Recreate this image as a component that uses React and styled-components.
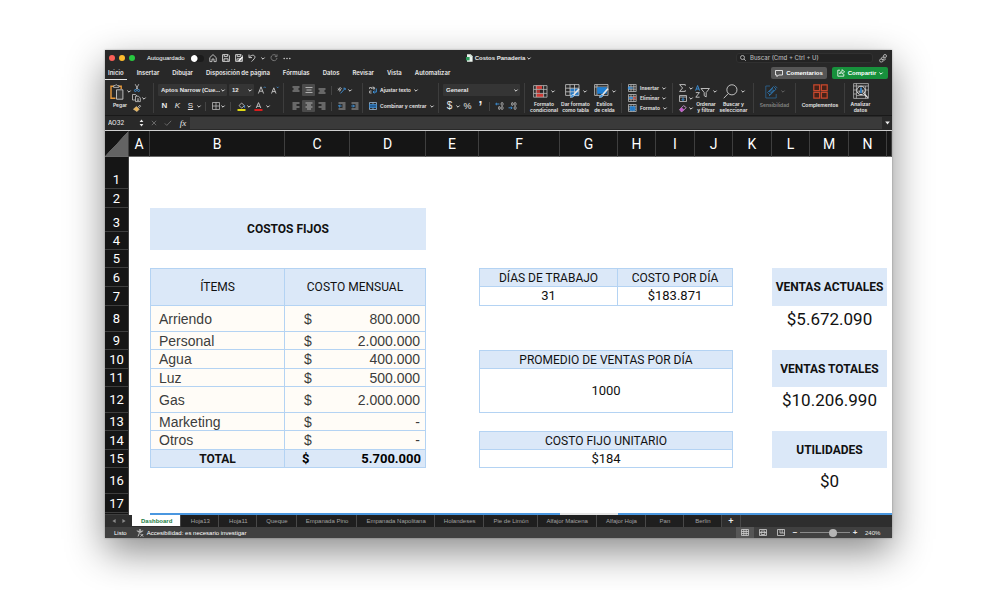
import React from "react";
import styled, { createGlobalStyle, css } from "styled-components";

const UI = `Inter, "Liberation Sans", sans-serif`;
const SANS = `"Liberation Sans", Arial, sans-serif`;
const SHEET = `Roboto, "Liberation Sans", sans-serif`;
const LINE = "#b4d3f3";
const BLUE = "#3d93dc";
const INK = "#c9c9c9";

const Global = createGlobalStyle`
  *, *::before, *::after { box-sizing: border-box; }
  body { margin: 0; background: #fff; font-family: ${UI}; }
  button, input, select { font: inherit; color: inherit; margin: 0; padding: 0; border: 0; background: none; }
`;

const Page = styled.main`
  padding: 50px 108px 52px 105px;
`;

const Window = styled.div`
  display: flex;
  flex-direction: column;
  overflow: hidden;
  background: #282828;
  color: #e8e8e8;
  box-shadow: 0 14px 36px rgba(0, 0, 0, 0.46), 0 0 2px rgba(0, 0, 0, 0.3);
`;

const Svg = styled.svg`
  display: block;
  flex: none;
  fill: none;
  stroke: ${(p) => p.$c || INK};
  stroke-width: 1;
  overflow: visible;
`;

/* ---------- title bar ---------- */
const TitleBar = styled.header`
  display: grid;
  grid-template-columns: 1fr auto 1fr;
  align-items: center;
  height: 16px;
  font: 500 6px/8px ${SANS};
`;
const TitleLeft = styled.div`
  display: flex;
  align-items: center;
  gap: 5px;
  padding-left: 4px;
`;
const Lights = styled.div`
  display: flex;
  gap: 4px;
  margin-right: 7px;
`;
const Light = styled.button`
  width: 6px;
  height: 6px;
  border-radius: 50%;
  background: ${(p) => p.$c};
`;
const AutoSave = styled.label`
  display: flex;
  align-items: center;
  gap: 6px;
  color: #fff;
`;
const Toggle = styled.input`
  appearance: none;
  width: 13px;
  height: 7px;
  border-radius: 4px;
  background: radial-gradient(circle at 3px 50%, #fff 3px, transparent 4px) #1b1b1b;
`;
const QuickButton = styled.button`
  display: grid;
  place-items: center;
  width: ${(p) => p.$w || 8}px;
  height: 10px;
`;
const DocTitle = styled.button`
  display: flex;
  align-items: center;
  gap: 2px;
  font-weight: 700;
`;
const TitleRight = styled.div`
  display: flex;
  justify-content: flex-end;
  align-items: center;
  gap: 6px;
  padding-right: 5px;
`;
const SearchBox = styled.label`
  display: flex;
  align-items: center;
  gap: 4px;
  width: 137px;
  height: 10px;
  padding-left: 3px;
  border-radius: 3px;
  background: #232323;
  border: 1px solid #303030;
  input { flex: 1; min-width: 0; outline: 0; font: 500 6px/8px ${UI}; }
  input::placeholder { color: #b5b5b5; opacity: 1; }
`;

/* ---------- menu tabs ---------- */
const MenuRow = styled.div`
  display: flex;
  align-items: center;
  justify-content: space-between;
  height: 14px;
  padding-right: 4px;
  font: 700 6px/8px ${SANS};
`;
const Menus = styled.nav`
  display: flex;
  gap: 7px;
  font: 600 6px/8px ${UI};
`;
const MenuTab = styled.button`
  height: 14px;
  padding: 0 3px;
  border-bottom: 1px solid ${(p) => (p.$on ? "#e6e6e6" : "transparent")};
`;
const Actions = styled.div`
  display: flex;
  gap: 5px;
`;
const Action = styled.button`
  display: flex;
  align-items: center;
  justify-content: center;
  gap: 3px;
  width: 56px;
  height: 12px;
  border-radius: 2px;
  color: #fff;
  background: ${(p) => (p.$green ? "#17913c" : "#565656")};
`;

/* ---------- ribbon ---------- */
const Ribbon = styled.div`
  display: flex;
  height: 36px;
  padding: 3px 0;
  border-bottom: 1px solid #191919;
  font: 600 5px/6px ${UI};
`;
const Group = styled.div`
  flex: none;
  width: ${(p) => p.$w}px;
  height: 30px;
  padding: ${(p) => p.$pad || "0 4px"};
  display: flex;
  flex-direction: ${(p) => (p.$rows ? "column" : "row")};
  justify-content: ${(p) => (p.$rows ? "space-between" : p.$justify || "flex-start")};
  gap: ${(p) => p.$gap || 0}px;
  border-right: 1px solid ${(p) => (p.$last ? "transparent" : "#3d3d3d")};
`;
const Line = styled.div`
  display: flex;
  align-items: center;
  gap: ${(p) => p.$gap || 0}px;
  height: ${(p) => p.$h || 14}px;
`;
const Tool = styled.button`
  display: grid;
  place-items: center;
  flex: none;
  width: ${(p) => p.$w || 13}px;
  height: 12px;
  border-radius: 1px;
  background: ${(p) => (p.$on ? "#4a4a4a" : "none")};
  font: ${(p) => p.$font || `700 8px/10px ${SANS}`};
`;
const Divider = styled.span`
  flex: none;
  width: 1px;
  height: 9px;
  margin: 0 ${(p) => p.$m || 3}px;
  background: #444;
`;
const ComboBox = styled.div`
  position: relative;
  flex: none;
  width: ${(p) => p.$w}px;
  height: 12px;
  border-radius: 1px;
  background: #353535;
  select {
    appearance: none;
    width: 100%;
    height: 12px;
    padding: 0 7px 0 3px;
    font: 700 6px/12px ${SANS};
    outline: 0;
  }
  svg { position: absolute; right: 2px; top: 5px; pointer-events: none; }
`;
const TextTool = styled.button`
  display: flex;
  align-items: center;
  gap: 3px;
  height: ${(p) => p.$h || 12}px;
  white-space: nowrap;
`;
const BigTool = styled.button`
  display: flex;
  flex-direction: column;
  align-items: center;
  gap: 2px;
  flex: none;
  width: ${(p) => p.$w}px;
  white-space: nowrap;
  color: ${(p) => (p.$off ? "#858585" : "inherit")};
  line-height: 6px;
`;
const BigIcon = styled.span`
  display: flex;
  align-items: center;
  gap: 3px;
  height: 17px;
`;

/* ---------- formula bar ---------- */
const FormulaBar = styled.div`
  display: flex;
  align-items: center;
  height: 15px;
  border-bottom: 1px solid #cfcfcf;
  background: #292929;
  font: 500 6px/8px ${UI};
`;
const NameBox = styled.input`
  width: 32px;
  padding-left: 3px;
  outline: 0;
`;
const FormulaTools = styled.div`
  display: flex;
  align-items: center;
  gap: 5px;
  width: 53px;
`;
const FormulaInput = styled.input`
  flex: 1;
  min-width: 0;
  height: 12px;
  background: #3a3a3a !important;
  outline: 0;
`;
const Expand = styled.button`
  display: grid;
  place-items: center;
  width: 10px;
  height: 12px;
`;

/* ---------- sheet ---------- */
const Grid = styled.table`
  width: 100%;
  table-layout: fixed;
  border-collapse: separate;
  border-spacing: 0;
  background: #fff;
  color: #111;
  font: 400 12px/16px ${SHEET};
  th, td { padding: 0; }
`;
const ColHead = styled.th`
  height: 26px;
  background: #151515;
  color: #fff;
  font: 400 14px/18px ${SHEET};
  border-right: 1px solid #3e3e3e;
  border-bottom: 1px solid #6a6a6a;
`;
const Corner = styled(ColHead)`
  background: linear-gradient(133deg, #151515 50%, #636363 51%);
`;
const RowHead = styled.th`
  background: #151515;
  color: #fff;
  font: 400 13px/17px ${SHEET};
  vertical-align: ${(p) => (p.$low ? "bottom" : "middle")};
  border-right: 1px solid #3e3e3e;
  border-bottom: 1px solid #3e3e3e;
`;
const Row = styled.tr`
  height: ${(p) => p.$h}px;
`;
const Cell = styled.td`
  text-align: center;
  white-space: nowrap;
  line-height: 16px;
`;
const Banner = styled(Cell)`
  background: #dbe8f8;
  font-weight: 700;
`;
const Boxed = styled(Cell)`
  border-bottom: 1px solid ${LINE};
  border-right: 1px solid ${LINE};
  ${(p) => p.$left && css`border-left: 1px solid ${LINE};`}
  ${(p) => p.$top && css`border-top: 1px solid ${LINE};`}
  ${(p) => p.$head && css`background: #dbe8f8;`}
  ${(p) => p.$num && css`font-size: 13px;`}
`;
const Item = styled(Boxed)`
  text-align: left;
  padding-left: 8px !important;
  background: #fffcf7;
  color: #3c3c3c;
  font: 400 14px/16px ${SANS};
`;
const Money = styled(Item)`
  border-right: 0;
  padding-left: 19px !important;
`;
const Amount = styled(Item)`
  text-align: right;
  padding: 0 5px 0 0 !important;
`;
const TotalLabel = styled(Boxed)`
  background: #dbe8f8;
  font-weight: 700;
`;
const TotalMoney = styled(Money)`
  background: #dbe8f8;
  color: #000;
  font: 700 13px/16px ${SHEET};
  padding-left: 17px !important;
`;
const TotalAmount = styled(Amount)`
  background: #dbe8f8;
  color: #000;
  font: 700 13px/16px ${SHEET};
  padding-right: 4px !important;
`;
const Result = styled(Cell)`
  font-size: 17px;
  line-height: 18px;
`;
const Edge = styled.td`
  height: 2px;
  background: ${(p) => (p.$on ? "#4a97e0" : "#e4e4e4")};
`;

/* ---------- sheet tabs and status ---------- */
const SheetTabs = styled.nav`
  display: flex;
  height: 12px;
  background: #2e2e2e;
  font: 400 6px/10px ${SANS};
`;
const Arrows = styled.div`
  display: flex;
  align-items: center;
  justify-content: center;
  gap: 6px;
  width: 27px;
`;
const SheetTab = styled.button`
  min-width: 38px;
  height: ${(p) => (p.$on ? 11 : 12)}px;
  padding: 0 8px 0 9px;
  white-space: nowrap;
  border-right: 1px solid #484848;
  background: ${(p) => (p.$on ? "#fff" : "#1f1f1f")};
  color: ${(p) => (p.$on ? "#1c7d44" : "#a2a2a2")};
  font-weight: ${(p) => (p.$on ? 700 : 400)};
`;
const AddTab = styled.button`
  width: 19px;
  border-right: 1px solid #484848;
  font: 700 9px/12px ${SANS};
`;
const StatusBar = styled.footer`
  display: flex;
  align-items: center;
  justify-content: space-between;
  height: 11px;
  background: #404040;
  font: 400 6px/8px ${SANS};
`;
const StatusLeft = styled.div`
  display: flex;
  align-items: center;
  gap: 3px;
  padding-left: 9px;
  color: #fff;
  span { margin-right: 6px; }
`;
const StatusRight = styled.div`
  display: flex;
  align-items: center;
  padding-right: 10px;
`;
const ViewButton = styled.button`
  display: grid;
  place-items: center;
  width: 18px;
  height: 11px;
  background: ${(p) => (p.$on ? "#565656" : "none")};
`;
const ZoomStep = styled.button`
  width: 10px;
  font: 700 8px/10px ${SANS};
`;
const Zoom = styled.input`
  appearance: none;
  width: 50px;
  height: 8px;
  background: linear-gradient(#8a8a8a, #8a8a8a) center / 100% 1px no-repeat !important;
  &::-webkit-slider-thumb {
    appearance: none;
    width: 8px;
    height: 8px;
    border-radius: 50%;
    background: #b4b4b4;
  }
`;
const ZoomValue = styled.output`
  margin-left: 5px;
  width: 17px;
`;

/* ---------- icons ---------- */
const Chevron = ({ c }) => (
  <Svg width="4" height="3" viewBox="0 0 4 3" $c={c || "#ddd"}><path d="M.4.6 2 2.2 3.6.6" /></Svg>
);
const HomeIcon = () => <Svg width="8" height="8" viewBox="0 0 8 8"><path d="M.8 3.6 4 .6l3.2 3v4H5V5H3v2.600H.8z" strokeWidth=".9" /></Svg>;
const SaveIcon = ({ pen }) => (
  <Svg width="8" height="8" viewBox="0 0 8 8" strokeWidth=".9">
    <path d="M.6.6h5.600l1.200 1.200v5.600H.6zM2.200.8v1.800h3.200V.8M2 7.200V4.800h4v2.400" />
    {pen && <path d="m3.600 7 3.800-4" stroke="#fff" strokeWidth="1.400" />}
  </Svg>
);
const UndoIcon = () => <Svg width="8" height="8" viewBox="0 0 8 8"><path d="M1 .6v3h3M1.200 3.400C3 .8 6 .6 6.800 2.400 7.500 4 5.500 5.500 3.600 7.600" /></Svg>;
const RedoIcon = () => <Svg width="8" height="8" viewBox="0 0 8 8" $c="#777"><path d="M6.200 1.600A3 3 0 1 0 7 4M7 .4v2.200H4.800" /></Svg>;
const DotsIcon = () => <Svg width="8" height="3" viewBox="0 0 8 3"><g fill={INK} stroke="none"><circle cx="1.200" cy="1.500" r=".8" /><circle cx="4" cy="1.500" r=".8" /><circle cx="6.800" cy="1.500" r=".8" /></g></Svg>;
const FileIcon = () => (
  <Svg width="7" height="8" viewBox="0 0 7 8"><path d="M1 .3h3.600L6.600 2.300v5.500H1z" fill="#eef5ef" stroke="none" /><path d="M0 3h3.600v3.400H0z" fill="#2c9a5b" stroke="none" /><path d="M4.600.3v2h2" stroke="#a9c9b4" strokeWidth=".5" /></Svg>
);
const SearchIcon = () => <Svg width="15" height="15" viewBox="0 0 16 16"><circle cx="9.500" cy="6.200" r="5.400" /><path d="M5.600 10.200.8 15.200" /></Svg>;
const LensIcon = () => <Svg width="6" height="6" viewBox="0 0 6 6"><circle cx="2.500" cy="2.500" r="2" strokeWidth=".8" /><path d="m4 4 1.800 1.800" strokeWidth=".8" /></Svg>;
const PeopleIcon = () => <Svg width="8" height="9" viewBox="0 0 8 9"><g strokeWidth=".8"><circle cx="6" cy="2" r="1.500" /><circle cx="3.800" cy="4.400" r="1.300" /><rect x=".6" y="5" width="3.400" height="3" rx="1.400" /><path d="M4.600 6.800 7 4.600" /></g></Svg>;
const CommentIcon = () => <Svg width="8" height="7" viewBox="0 0 8 7" $c="#fff"><path d="M.5.500h7v4.500H3.600L2 6.600V5H.5z" strokeWidth=".8" /></Svg>;
const ShareIcon = () => <Svg width="8" height="8" viewBox="0 0 8 8" $c="#fff"><path d="M3 1.200H.8v6h6V5M2.600 5C2.800 3 4 2.200 5.200 2.200V.6L7.600 3 5.200 5V3.600C4 3.600 3.200 4 2.600 5z" strokeWidth=".8" /></Svg>;

const PasteIcon = () => (
  <Svg width="14" height="16" viewBox="0 0 14 16">
    <path d="M3.500 2.200H1v12h4.500M9 2.200h2.200V5" stroke="#e89a3c" strokeWidth="1.400" />
    <path d="M3.600 3.400V1.600h1.500a1.200 1.200 0 0 1 2.300 0h1.500v1.800z" strokeWidth=".8" />
    <path d="M6.500 5.800h6.400v9.400H6.500z" fill="#3a3a3a" strokeWidth=".9" />
  </Svg>
);
const CutIcon = () => (
  <Svg width="6" height="8" viewBox="0 0 6 8"><path d="M1.200.2 4 5.500M4.800.2 2 5.500" strokeWidth=".8" /><g stroke={BLUE} strokeWidth=".9"><circle cx="1.400" cy="6.500" r="1" /><circle cx="4.600" cy="6.500" r="1" /></g></Svg>
);
const CopyIcon = () => <Svg width="9" height="8" viewBox="0 0 9 8"><path d="M3 6H.5V.5h3L5 2M3.500 2.200h3L8.300 4v3.600H3.500zM5 5h2M5 6.300h2" strokeWidth=".8" /></Svg>;
const BrushIcon = () => <Svg width="8" height="7" viewBox="0 0 8 7"><path d="m4.800 2.200 2-2 .9.9-2 2" strokeWidth=".8" /><path d="M3.400 1.500 6.200 4.300 4 6.600.4 4.200z" fill="#e9b45a" stroke="#f0d9a8" strokeWidth=".5" /></Svg>;
const BordersIcon = () => <Svg width="8" height="8" viewBox="0 0 8 8"><path d="M.5.500h7v7h-7zM4 .5v7M.5 4h7" strokeWidth=".7" /></Svg>;
const FillIcon = () => <Svg width="9" height="9" viewBox="0 0 9 9"><path d="m2 3.600 2.600-2.600 2.800 2.600-2.600 2.500z" strokeWidth=".8" /><path d="M7.600 3.500v2.200" stroke={BLUE} /><path d="M.5 8h8" stroke="#f4ee14" strokeWidth="1.800" /></Svg>;
const FontColorIcon = () => <Svg width="9" height="9" viewBox="0 0 9 9"><path d="M2.200 6 4.500.600 6.800 6M3 4.300h3" strokeWidth=".9" /><path d="M.5 8h8" stroke="#ee1c1c" strokeWidth="1.800" /></Svg>;
const SizeIcon = ({ down }) => <Svg width="8" height="8" viewBox="0 0 8 8"><path d={down ? "M.5 7.500 2.800 1.800 5 7.500M1.300 5.600h3" : "M.4 7.500 3 .8l2.600 6.700M1.300 5.200h3.400"} strokeWidth=".9" /><path d={down ? "m5.800.8.900 1 .9-1" : "m5.800 1.800.9-1 .9 1"} stroke={BLUE} strokeWidth=".8" /></Svg>;
const LinesIcon = ({ d }) => <Svg width="8" height="8" viewBox="0 0 8 8"><path d={d} strokeWidth=".8" /></Svg>;
const OrientIcon = () => <Svg width="9" height="8" viewBox="0 0 9 8"><path d="M1 4.500 3.500 1M2.500 5.500 4.500 2M.8 2.600l2.600 2" strokeWidth=".8" /><path d="m3.500 7.400 4.600-5M8.200 4V2.200H6.400" stroke={BLUE} strokeWidth=".9" /></Svg>;
const IndentIcon = ({ flip }) => <Svg width="8" height="8" viewBox="0 0 8 8"><path d="M.5 1h7M4.500 3h3M4.500 5h3M.5 7h7" strokeWidth=".8" /><path d={flip ? "M.3 4h3M2 2.600 3.400 4 2 5.400" : "M3.600 4h-3M2 2.600.6 4 2 5.400"} stroke={BLUE} /></Svg>;
const WrapIcon = () => <Svg width="8" height="8" viewBox="0 0 8 8"><path d="M.6 3V1.500h2V3M4 .5V3h1.600V1.600H4M.6 5v2h2M.6 5h2" strokeWidth=".8" /><path d="M7.300 2.500v3.600H4.200M5.400 4.800 4 6.100l1.400 1.300" stroke={BLUE} /></Svg>;
const MergeIcon = () => <Svg width="8" height="8" viewBox="0 0 8 8"><path d="M.5.500h7v7h-7zM4 .5v2M4 5.500v2" strokeWidth=".8" stroke="#9bb9d6" /><path d="M.6 2.500h6.800v3H.6z" fill="#245f98" stroke={BLUE} strokeWidth=".7" /></Svg>;
const DecimalIcon = ({ less }) => <Svg width="9" height="8" viewBox="0 0 9 8"><g strokeWidth=".8"><rect x="6.200" y=".6" width="1.800" height="2.800" rx=".8" /><rect x="6.200" y="4.600" width="1.800" height="2.800" rx=".8" />{!less && <rect x="3.600" y="4.600" width="1.400" height="2.800" rx=".7" />}{less && <rect x="3.600" y=".6" width="1.400" height="2.800" rx=".7" />}</g><path d={less ? "M.5 5.800h3.600M2.800 4.600 4.200 5.800 2.800 7.200" : "M4.400 2H.7M2 .8.7 2 2 3.200"} stroke={BLUE} strokeWidth=".9" /></Svg>;
const CondIcon = () => (
  <Svg width="15" height="13" viewBox="0 0 15 13"><path d="M3 .5h6v3.500H3zM3 8.500h7.500v3.500H3z" fill="#cf3a34" stroke="none" /><path d="M3 4.500h4v4H3z" fill="#a83430" stroke="none" /><path d="M.6.600h13.400v11.600H.6zM.6 4.400h13.400M.6 8.400h13.400M3.200.6v11.600M10.600.6v11.600" strokeWidth=".8" stroke="#b9b9b9" /></Svg>
);
const TableIcon = () => (
  <Svg width="15" height="14" viewBox="0 0 15 14"><path d="M5 4.400h9v7.800H5z" fill="#2478c4" stroke="none" /><path d="M.6.600h13.400v10.800H.6zM.6 4.200h13.400M.6 7.800h13.400M5 .6v10.800M9.500.6v10.800" strokeWidth=".8" /><path d="M14 5 8.200 11.200" stroke="#e6e6e6" strokeWidth="1.600" /><path d="M8 10.400c-1.800 0-1.400 2-3 2.800 2 .6 3.900-.2 4-1.800z" fill={BLUE} stroke="#d6e6f5" strokeWidth=".5" /></Svg>
);
const StyleIcon = () => (
  <Svg width="15" height="14" viewBox="0 0 15 14"><path d="M.6.600h13.400v10.800H.6zM3 .6v10.800M.6 3h13.400" strokeWidth=".8" /><path d="M3.200 3.200h9.600v6.600H3.200z" fill="#1f7fd3" stroke="none" /><path d="M14 4.600 8.200 11.200" stroke="#e6e6e6" strokeWidth="1.600" /><path d="M8 10.400c-1.800 0-1.400 2-3 2.800 2 .6 3.900-.2 4-1.800z" fill={BLUE} stroke="#d6e6f5" strokeWidth=".5" /></Svg>
);
const CellsIcon = ({ kind }) => (
  <Svg width="9" height="8" viewBox="0 0 9 8"><path d="M.5.500h7.700v7H.5zM.5 2.800h7.700M.5 5.200h7.700M3 .5v7M5.800.5v7" strokeWidth=".7" />
    {kind === "add" && <path d="M0 4h5M2 2.400.4 4 2 5.600" stroke={BLUE} strokeWidth="1.200" />}
    {kind === "del" && <><path d="M1 4h4" stroke={BLUE} strokeWidth="1.600" /><path d="m5 2.600 3 3M8 2.600l-3 3" stroke="#e04a3c" /></>}
    {kind === "fmt" && <path d="M2 2.600h5v4H2z" fill="#2478c4" stroke={BLUE} strokeWidth=".6" />}
  </Svg>
);
const SumIcon = () => <Svg width="7" height="8" viewBox="0 0 7 8"><path d="M6.300 1.800V.6H.6L3.600 4 .6 7.400h5.700V6.200" strokeWidth=".9" /></Svg>;
const FillDownIcon = () => <Svg width="8" height="7" viewBox="0 0 8 7"><path d="M.5.500h7v6h-7zM.5 2h7" strokeWidth=".8" /><path d="M4 2.400v3M2.700 4.200 4 5.500l1.300-1.300" stroke={BLUE} /></Svg>;
const EraserIcon = () => <Svg width="8" height="7" viewBox="0 0 8 7"><path d="m.6 4.600 4-4 2.600 2-4 4H2z" strokeWidth=".8" stroke="#d9a3de" /><path d="m.6 4.600 2-2 2.600 2-2 2H2z" fill="#c25bcb" stroke="none" /></Svg>;
const SortIcon = () => <Svg width="15" height="13" viewBox="0 0 15 13"><path d="M.6 5.600 2.600.500l2 5.100M1.200 4h2.800" stroke={BLUE} strokeWidth=".9" /><path d="M.8 7.600h3.600L.8 12.200h3.800" strokeWidth=".9" /><path d="M6 3.500h8.400l-3.200 4v4.400l-2-1.200V7.500z" strokeWidth=".9" /></Svg>;
const SensIcon = () => <Svg width="13" height="14" viewBox="0 0 13 14" $c="#2c6797"><path d="M5 1H.8v12h10.400V9" strokeWidth=".8" /><path d="m2.500 7.500 6-6 2.600 2.600-6 6zM4 11l6.500-6.500M10 .8l2.400 2.400" strokeWidth="1" /><path d="m4 7 3.800-3.800M5.400 8.400 9 4.800" strokeWidth="1.200" /></Svg>;
const AddinIcon = () => <Svg width="15" height="15" viewBox="0 0 15 15" $c="#c9482c"><path d="M.8.800h5.800v5.800H.8zM8.400.8h5.800v5.800H8.400zM.8 8.400h5.800v5.800H.8zM8.400 8.400h5.800v5.800H8.400z" fill="#472219" strokeWidth="1.200" /></Svg>;
const AnalyzeIcon = () => (
  <Svg width="16" height="16" viewBox="0 0 16 16"><path d="M.6.600h14.800v14.800H.6zM.6 3h14.800M3.400.6v14.800M.6 7h3M.6 11h3M12.600 3v12.400M12 7h3.400M3.400 12.600h9" strokeWidth=".7" /><circle cx="8" cy="7.400" r="4.200" fill="#2a2a2a" stroke="#eee" strokeWidth=".9" /><path d="M6.200 7.400v2.400M9.800 6.800v3" strokeWidth="1.200" /><path d="M8 4.600v5.600" stroke={BLUE} strokeWidth="1.600" /><path d="m11 10.600 3.800 4" stroke="#eee" strokeWidth="1.200" /></Svg>
);
const StepperIcon = () => <Svg width="5" height="8" viewBox="0 0 5 8"><path d="M.6 3 2.500.400 4.400 3zM.6 5l1.900 2.600L4.400 5z" fill="#e8e8e8" stroke="none" /></Svg>;
const CrossIcon = () => <Svg width="6" height="6" viewBox="0 0 6 6" $c="#777"><path d="m.8.800 4.400 4.400M5.200.8.8 5.200" strokeWidth=".8" /></Svg>;
const CheckIcon = () => <Svg width="8" height="6" viewBox="0 0 8 6" $c="#777"><path d="m.8 3.400 2 2L7.200.800" strokeWidth=".8" /></Svg>;
const AccessIcon = () => <Svg width="8" height="8" viewBox="0 0 8 8" $c="#e2e2e2"><path d="m.8 1.800 2.400.9v2L2 7.400M7.200 1.800l-2.400.9v1.500M3.200 2.700h1.600M4.600 5l2.600 2.600M7.200 5 4.600 7.600" strokeWidth=".8" /><circle cx="4" cy="1.200" r=".8" strokeWidth=".7" /></Svg>;
const ViewIcon = ({ d }) => <Svg width="8" height="7" viewBox="0 0 8 7" $c="#d0d0d0"><path d={d} strokeWidth=".8" /></Svg>;
const Triangle = ({ d }) => <Svg width="4" height="4" viewBox="0 0 4 4"><path d={d} fill="#8a8a8a" stroke="none" /></Svg>;

/* ---------- data ---------- */
const MENUS = ["Inicio", "Insertar", "Dibujar", "Disposición de página", "Fórmulas", "Datos", "Revisar", "Vista", "Automatizar"];
const COLS = [24, 21, 135, 65, 76, 53, 81, 58, 38, 39, 38, 39, 38, 39, 38];
const LETTERS = "ABCDEFGHIJKLMN".split("");
const TABS = ["Dashboard", "Hoja13", "Hoja11", "Queque", "Empanada Pino", "Empanada Napolitana", "Holandeses", "Pie de Limón", "Alfajor Maicena", "Alfajor Hoja", "Pan", "Berlin"];

const Combo = ({ w, label, value }) => (
  <ComboBox $w={w}>
    <select aria-label={label} defaultValue={value}><option>{value}</option></select>
    <Chevron />
  </ComboBox>
);
const Big = ({ w, icon, lines, off, arrow = true }) => (
  <BigTool $w={w} $off={off}>
    <BigIcon>{icon}{arrow && <Chevron c={off && "#666"} />}</BigIcon>
    <span>{lines.map((t, i) => <React.Fragment key={t}>{i > 0 && <br />}{t}</React.Fragment>)}</span>
  </BigTool>
);
const Expense = ({ name, value }) => (
  <>
    <Item $left>{name}</Item>
    <Money>$</Money>
    <Amount>{value}</Amount>
  </>
);

function Sheet() {
  return (
    <Grid>
      <colgroup>{COLS.map((w, i) => <col key={i} style={{ width: w }} />)}<col /></colgroup>
      <thead>
        <tr><Corner aria-label="Seleccionar todo" />{LETTERS.map((l) => <ColHead key={l} scope="col">{l}</ColHead>)}<ColHead /></tr>
      </thead>
      <tbody>
        <Row $h={32}><RowHead $low>1</RowHead><Cell colSpan={15} /></Row>
        <Row $h={19}><RowHead>2</RowHead><Cell colSpan={15} /></Row>
        <Row $h={24}><RowHead $low>3</RowHead><Cell /><Banner colSpan={3} rowSpan={2}>COSTOS FIJOS</Banner><Cell colSpan={11} /></Row>
        <Row $h={18}><RowHead>4</RowHead><Cell /><Cell colSpan={11} /></Row>
        <Row $h={18}><RowHead>5</RowHead><Cell colSpan={15} /></Row>
        <Row $h={19}>
          <RowHead>6</RowHead><Cell />
          <Boxed $head $top $left rowSpan={2}>ÍTEMS</Boxed><Boxed $head $top colSpan={2} rowSpan={2}>COSTO MENSUAL</Boxed><Cell />
          <Boxed $head $top $left colSpan={2}>DÍAS DE TRABAJO</Boxed><Boxed $head $top colSpan={3}>COSTO POR DÍA</Boxed><Cell />
          <Banner colSpan={3} rowSpan={2}>VENTAS ACTUALES</Banner><Cell />
        </Row>
        <Row $h={19}><RowHead>7</RowHead><Cell /><Cell /><Boxed $num $left colSpan={2}>31</Boxed><Boxed $num colSpan={3}>$183.871</Boxed><Cell /><Cell /></Row>
        <Row $h={26}><RowHead>8</RowHead><Cell /><Expense name="Arriendo" value="800.000" /><Cell colSpan={7} /><Result colSpan={3}>$5.672.090</Result><Cell /></Row>
        <Row $h={18}><RowHead>9</RowHead><Cell /><Expense name="Personal" value="2.000.000" /><Cell colSpan={11} /></Row>
        <Row $h={19}>
          <RowHead>10</RowHead><Cell /><Expense name="Agua" value="400.000" /><Cell />
          <Boxed $head $top $left colSpan={5}>PROMEDIO DE VENTAS POR DÍA</Boxed><Cell />
          <Banner colSpan={3} rowSpan={2}>VENTAS TOTALES</Banner><Cell />
        </Row>
        <Row $h={18}><RowHead>11</RowHead><Cell /><Expense name="Luz" value="500.000" /><Cell /><Boxed $num $left colSpan={5} rowSpan={2}>1000</Boxed><Cell /><Cell /></Row>
        <Row $h={26}><RowHead>12</RowHead><Cell /><Expense name="Gas" value="2.000.000" /><Cell /><Cell /><Result colSpan={3}>$10.206.990</Result><Cell /></Row>
        <Row $h={18}><RowHead>13</RowHead><Cell /><Expense name="Marketing" value="-" /><Cell colSpan={11} /></Row>
        <Row $h={19}>
          <RowHead>14</RowHead><Cell /><Expense name="Otros" value="-" /><Cell />
          <Boxed $head $top $left colSpan={5}>COSTO FIJO UNITARIO</Boxed><Cell />
          <Banner colSpan={3} rowSpan={2}>UTILIDADES</Banner><Cell />
        </Row>
        <Row $h={18}>
          <RowHead>15</RowHead><Cell /><TotalLabel $left>TOTAL</TotalLabel><TotalMoney>$</TotalMoney><TotalAmount>5.700.000</TotalAmount><Cell />
          <Boxed $num $left colSpan={5}>$184</Boxed><Cell /><Cell />
        </Row>
        <Row $h={26}><RowHead>16</RowHead><Cell colSpan={11} /><Result colSpan={3}>$0</Result><Cell /></Row>
        <Row $h={19}><RowHead>17</RowHead><Cell colSpan={15} /></Row>
        <Row $h={2}><RowHead /><Cell /><Edge $on colSpan={5} /><Edge /><Edge $on colSpan={8} /></Row>
      </tbody>
    </Grid>
  );
}

export default function App() {
  return (
    <Page>
      <Global />
      <Window>
        <TitleBar>
          <TitleLeft>
            <Lights>
              <Light $c="#fb5f57" aria-label="Cerrar" /><Light $c="#fdbc2e" aria-label="Minimizar" /><Light $c="#28c840" aria-label="Ampliar" />
            </Lights>
            <AutoSave>Autoguardado<Toggle type="checkbox" /></AutoSave>
            <QuickButton aria-label="Inicio"><HomeIcon /></QuickButton>
            <QuickButton aria-label="Guardar"><SaveIcon /></QuickButton>
            <QuickButton aria-label="Guardar como"><SaveIcon pen /></QuickButton>
            <QuickButton aria-label="Deshacer"><UndoIcon /></QuickButton>
            <QuickButton $w={4} aria-label="Historial"><Chevron /></QuickButton>
            <QuickButton aria-label="Rehacer"><RedoIcon /></QuickButton>
            <QuickButton aria-label="Más"><DotsIcon /></QuickButton>
          </TitleLeft>
          <DocTitle><FileIcon />Costos Panadería<Chevron /></DocTitle>
          <TitleRight>
            <SearchBox><LensIcon /><input type="text" aria-label="Buscar" placeholder="Buscar (Cmd + Ctrl + U)" /></SearchBox>
            <QuickButton aria-label="Presencia"><PeopleIcon /></QuickButton>
          </TitleRight>
        </TitleBar>

        <MenuRow>
          <Menus>{MENUS.map((m, i) => <MenuTab key={m} $on={i === 0}>{m}</MenuTab>)}</Menus>
          <Actions>
            <Action><CommentIcon />Comentarios</Action>
            <Action $green><ShareIcon />Compartir<Chevron c="#fff" /></Action>
          </Actions>
        </MenuRow>

        <Ribbon>
          <Group $w={49} $gap={1} $pad="0 0 0 5px">
            <Big w={20} icon={<PasteIcon />} lines={["Pegar"]} />
            <div>
              <Line $h={10}><Tool $w={11} aria-label="Cortar"><CutIcon /></Tool></Line>
              <Line $h={10}><Tool $w={11} aria-label="Copiar"><CopyIcon /></Tool><Chevron /></Line>
              <Line $h={10}><Tool $w={11} aria-label="Copiar formato"><BrushIcon /></Tool></Line>
            </div>
          </Group>
          <Group $w={130} $rows>
            <Line $gap={2}>
              <Combo w={69} label="Fuente" value="Aptos Narrow (Cue..." />
              <Combo w={25} label="Tamaño" value="12" />
              <Tool $w={11} aria-label="Aumentar fuente"><SizeIcon /></Tool>
              <Tool $w={11} aria-label="Reducir fuente"><SizeIcon down /></Tool>
            </Line>
            <Line>
              <Tool>N</Tool>
              <Tool $font={`italic 400 8px/10px ${SANS}`}>K</Tool>
              <Tool $font={`400 8px/10px ${SANS}`}><u>S</u></Tool>
              <Chevron />
              <Divider $m={4} />
              <Tool $w={11} aria-label="Bordes"><BordersIcon /></Tool>
              <Chevron />
              <Divider $m={5} />
              <Tool $w={11} aria-label="Color de relleno"><FillIcon /></Tool>
              <Chevron />
              <Tool $w={15} aria-label="Color de fuente"><FontColorIcon /></Tool>
              <Chevron />
            </Line>
          </Group>
          <Group $w={79} $rows $pad="0 0 0 5px">
            <Line>
              <Tool aria-label="Alinear arriba"><LinesIcon d="M.5 1h7M1.500 3h5M.5 5h7" /></Tool>
              <Tool $on aria-label="Alinear al medio"><LinesIcon d="M.5 1.500h7M1.500 4h5M.5 6.500h7" /></Tool>
              <Tool aria-label="Alinear abajo"><LinesIcon d="M.5 3h7M1.500 5h5M.5 7h7" /></Tool>
              <Divider />
              <Tool aria-label="Orientación"><OrientIcon /></Tool>
              <Chevron />
            </Line>
            <Line>
              <Tool aria-label="Alinear a la izquierda"><LinesIcon d="M.5 1h7M.5 3h4M.5 5h7M.5 7h4" /></Tool>
              <Tool $on aria-label="Centrar"><LinesIcon d="M.5 1h7M2 3h4M.5 5h7M2 7h4" /></Tool>
              <Tool aria-label="Alinear a la derecha"><LinesIcon d="M.5 1h7M3.500 3h4M.5 5h7M3.500 7h4" /></Tool>
              <Divider />
              <Tool aria-label="Disminuir sangría"><IndentIcon /></Tool>
              <Tool aria-label="Aumentar sangría"><IndentIcon flip /></Tool>
            </Line>
          </Group>
          <Group $w={76} $rows $pad="0 0 0 6px">
            <Line><TextTool><WrapIcon />Ajustar texto<Chevron /></TextTool></Line>
            <Line><TextTool><MergeIcon />Combinar y centrar<Chevron /></TextTool></Line>
          </Group>
          <Group $w={86} $rows>
            <Line><Combo w={77} label="Formato de número" value="General" /></Line>
            <Line>
              <Tool $font={`400 10px/10px ${SANS}`}>$</Tool>
              <Chevron />
              <Tool $w={15} $font={`400 9px/10px ${SANS}`}>%</Tool>
              <Tool $w={11} $font={`700 14px/8px ${SANS}`}>’</Tool>
              <Divider />
              <Tool aria-label="Aumentar decimales"><DecimalIcon /></Tool>
              <Tool aria-label="Disminuir decimales"><DecimalIcon less /></Tool>
            </Line>
          </Group>
          <Group $w={97} $gap={1} $pad="0 0 0 4px">
            <Big w={30} icon={<CondIcon />} lines={["Formato", "condicional"]} />
            <Big w={31} icon={<TableIcon />} lines={["Dar formato", "como tabla"]} />
            <Big w={25} icon={<StyleIcon />} lines={["Estilos", "de celda"]} />
          </Group>
          <Group $w={51} $rows $pad="0 0 0 6px">
            <TextTool $h={10}><CellsIcon kind="add" />Insertar<Chevron /></TextTool>
            <TextTool $h={10}><CellsIcon kind="del" />Eliminar<Chevron /></TextTool>
            <TextTool $h={10}><CellsIcon kind="fmt" />Formato<Chevron /></TextTool>
          </Group>
          <Group $w={81} $gap={2} $pad="0 0 0 5px">
            <div>
              <Line $h={10} $gap={2}><Tool $w={9} aria-label="Autosuma"><SumIcon /></Tool><Chevron /></Line>
              <Line $h={10} $gap={2}><Tool $w={9} aria-label="Rellenar"><FillDownIcon /></Tool><Chevron /></Line>
              <Line $h={10} $gap={2}><Tool $w={9} aria-label="Borrar"><EraserIcon /></Tool><Chevron /></Line>
            </div>
            <Big w={22} icon={<SortIcon />} lines={["Ordenar", "y filtrar"]} />
            <Big w={29} icon={<SearchIcon />} lines={["Buscar y", "seleccionar"]} />
          </Group>
          <Group $w={42} $justify="center"><Big w={34} off icon={<SensIcon />} lines={["Sensibilidad"]} /></Group>
          <Group $w={49} $justify="center"><Big w={40} arrow={false} icon={<AddinIcon />} lines={["Complementos"]} /></Group>
          <Group $w={32} $last $justify="center"><Big w={24} arrow={false} icon={<AnalyzeIcon />} lines={["Analizar", "datos"]} /></Group>
        </Ribbon>

        <FormulaBar>
          <NameBox type="text" aria-label="Cuadro de nombres" defaultValue="AO32" />
          <FormulaTools>
            <QuickButton $w={8} aria-label="Cambiar celda"><StepperIcon /></QuickButton>
            <QuickButton $w={8} aria-label="Cancelar"><CrossIcon /></QuickButton>
            <QuickButton $w={10} aria-label="Aceptar"><CheckIcon /></QuickButton>
            <Tool $w={10} $font={`italic 400 9px/10px "Liberation Serif", serif`}>fx</Tool>
          </FormulaTools>
          <FormulaInput type="text" aria-label="Barra de fórmulas" />
          <Expand aria-label="Expandir"><Svg width="5" height="4" viewBox="0 0 5 4"><path d="M.2.500h4.600L2.500 3.600z" fill="#eee" stroke="none" /></Svg></Expand>
        </FormulaBar>

        <Sheet />

        <SheetTabs>
          <Arrows><Triangle d="M3.600 0v4L.4 2z" /><Triangle d="M.4 0v4l3.200-2z" /></Arrows>
          {TABS.map((t, i) => <SheetTab key={t} $on={i === 0}>{t}</SheetTab>)}
          <AddTab aria-label="Agregar hoja">+</AddTab>
        </SheetTabs>

        <StatusBar>
          <StatusLeft><span>Listo</span><AccessIcon />Accesibilidad: es necesario investigar</StatusLeft>
          <StatusRight>
            <ViewButton $on aria-label="Vista normal"><ViewIcon d="M.5.500h7v6h-7zM.5 2.500h7M.5 4.500h7M2.800.5v6M5.200.5v6" /></ViewButton>
            <ViewButton aria-label="Diseño de página"><ViewIcon d="M.5.500h7v6h-7zM2.200 2h3.600v3.500H2.200zM.5 3.500h7" /></ViewButton>
            <ViewButton aria-label="Saltos de página"><ViewIcon d="M.5.500h7v6h-7zM3 .5v3.500h4.500M5.200.5V4" /></ViewButton>
            <ZoomStep>−</ZoomStep>
            <Zoom type="range" aria-label="Zoom" min="0" max="100" defaultValue="70" />
            <ZoomStep>+</ZoomStep>
            <ZoomValue>240%</ZoomValue>
          </StatusRight>
        </StatusBar>
      </Window>
    </Page>
  );
}
